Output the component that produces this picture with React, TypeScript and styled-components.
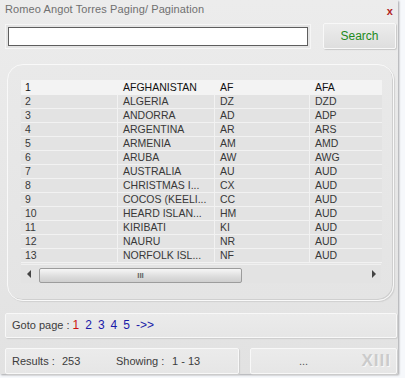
import React from "react";
import styled, { createGlobalStyle } from "styled-components";

const GlobalStyle = createGlobalStyle`
  html, body {
    margin: 0;
    padding: 0;
    background: #ffffff;
  }
  body {
    font-family: "Liberation Sans", Arial, sans-serif;
    font-size: 11px;
  }
`;

const Frame = styled.div`
  width: 405px;
  height: 378px;
  overflow: hidden;
  background: #f6f8fb;
`;

const Window = styled.div`
  width: 398px;
  height: 374px;
  display: flex;
  flex-direction: column;
  background: linear-gradient(#ececec, #e6e6e6 60%, #e2e2e2);
  box-shadow: 1px 1px 2px rgba(0, 0, 0, 0.35);
`;

const TitleBar = styled.div`
  height: 19px;
  display: flex;
  align-items: center;
  justify-content: space-between;
  padding: 0 5px 0 5px;
  color: #707070;
  font-size: 11px;
  letter-spacing: 0.1px;
`;

const Close = styled.span`
  color: #b02020;
  font-size: 11px;
  font-weight: bold;
  margin-top: 4px;
`;

const SearchRow = styled.div`
  display: flex;
  align-items: center;
  padding: 6px 2px 0 5px;
  gap: 12px;
`;

const InputWrap = styled.div`
  padding: 2px;
  border: 1px solid #f6f6f6;
  background: #e4e4e4;
`;

const SearchInput = styled.input`
  display: block;
  width: 294px;
  height: 15px;
  margin: 0;
  padding: 1px 2px;
  border: 1px solid #5e5e5e;
  background: #ffffff;
  outline: none;
`;

const SearchButton = styled.button`
  width: 76px;
  height: 26px;
  margin-top: -1px;
  border: 1px solid #f8f8f8;
  border-radius: 2px;
  background: linear-gradient(#ececec, #dedede);
  box-shadow: 1px 1px 1px #c8c8c8;
  color: #1d8a1d;
  font-family: "Liberation Sans", Arial, sans-serif;
  font-size: 12px;
  padding: 0;
`;

const ListPanel = styled.div`
  margin: 15px 4px 0 7px;
  height: 226px;
  border-radius: 16px;
  border: 1px solid #f9f9f9;
  background: linear-gradient(#e9e9e9, #e4e4e4);
  box-shadow: inset -1px -1px 0 #cfcfcf, 1px 1px 1px #d0d0d0;
  padding: 15px 12px 0 13px;
`;

const Grid = styled.div`
  width: 361px;
  background: #e3e3e3;
  font-size: 10.5px;
`;

const Row = styled.div<{ $selected?: boolean }>`
  display: grid;
  grid-template-columns: 96px 97px 95px 73px;
  height: 14px;
  line-height: 14px;
  color: ${(p) => (p.$selected ? "#111111" : "#383838")};
  background: ${(p) => (p.$selected ? "#f3f3f3" : "transparent")};
  border-bottom: 1px solid ${(p) => (p.$selected ? "#f3f3f3" : "#f2f2f2")};
  margin-bottom: -1px;
`;

const Cell = styled.div<{ $first?: boolean; $divided?: boolean }>`
  padding-left: ${(p) => (p.$first ? "3px" : "5px")};
  white-space: nowrap;
  overflow: hidden;
  border-left: 1px solid ${(p) => (p.$divided ? "#f2f2f2" : "transparent")};
`;

const HScroll = styled.div`
  display: flex;
  align-items: center;
  height: 18px;
  margin-top: 2px;
  border-top: 1px solid #f0f0f0;
  background: #e3e3e3;
`;

const Arrow = styled.div<{ $dir: "left" | "right" }>`
  width: 0;
  height: 0;
  border-top: 4px solid transparent;
  border-bottom: 4px solid transparent;
  ${(p) =>
    p.$dir === "left"
      ? "border-right: 4px solid #444; margin: 0 8px 0 6px;"
      : "border-left: 4px solid #444; margin: 0 5px 0 auto;"}
`;

const Thumb = styled.div`
  width: 201px;
  height: 13px;
  margin-top: 2px;
  border: 1px solid #9c9c9c;
  border-radius: 2px;
  background: linear-gradient(#f6f6f6, #dcdcdc 60%, #cfcfcf);
  display: flex;
  align-items: center;
  justify-content: center;
  color: #666;
  font-size: 8px;
  font-weight: bold;
`;

const Bar = styled.div`
  display: flex;
  align-items: center;
  height: 24px;
  border: 1px solid #f8f8f8;
  border-radius: 2px;
  background: linear-gradient(#ebebeb, #e6e6e6);
  box-shadow: 1px 1px 1px #cdcdcd;
  color: #3c3c3c;
  font-size: 11px;
`;

const GotoBar = styled(Bar)`
  margin: 12px 1px 0 5px;
  padding-left: 6px;
  font-size: 11px;
`;

const PageLink = styled.span<{ $current?: boolean }>`
  color: ${(p) => (p.$current ? "#cc1111" : "#1a1aa8")};
  margin-right: 6px;
  font-size: 12px;
`;

const StatusRow = styled.div`
  display: flex;
  gap: 11px;
  margin: 10px 1px 0 5px;
`;

const StatusLeft = styled(Bar)`
  width: 226px;
  padding-left: 6px;
`;

const StatusRight = styled(Bar)`
  flex: 1;
  justify-content: flex-end;
  position: relative;
`;

const Label = styled.span<{ $w: number }>`
  flex: 0 0 ${(p) => p.$w}px;
  white-space: pre;
`;

const Dots = styled.span`
  position: absolute;
  left: 48px;
  top: 6px;
  color: #555;
`;

const Roman = styled.span`
  color: #cbcbcb;
  font-size: 17px;
  font-weight: bold;
  letter-spacing: 1px;
  margin-right: 5px;
  text-shadow: 1px 1px 0 #f7f7f7;
`;

const rows: [string, string, string, string][] = [
  ["1", "AFGHANISTAN", "AF", "AFA"],
  ["2", "ALGERIA", "DZ", "DZD"],
  ["3", "ANDORRA", "AD", "ADP"],
  ["4", "ARGENTINA", "AR", "ARS"],
  ["5", "ARMENIA", "AM", "AMD"],
  ["6", "ARUBA", "AW", "AWG"],
  ["7", "AUSTRALIA", "AU", "AUD"],
  ["8", "CHRISTMAS I...", "CX", "AUD"],
  ["9", "COCOS (KEELI...", "CC", "AUD"],
  ["10", "HEARD ISLAN...", "HM", "AUD"],
  ["11", "KIRIBATI", "KI", "AUD"],
  ["12", "NAURU", "NR", "AUD"],
  ["13", "NORFOLK ISL...", "NF", "AUD"],
];

const App: React.FC = () => {
  return (
    <Frame>
      <GlobalStyle />
      <Window>
        <TitleBar>
          <span>Romeo Angot Torres Paging/ Pagination</span>
          <Close>x</Close>
        </TitleBar>
        <SearchRow>
          <InputWrap>
            <SearchInput type="text" />
          </InputWrap>
          <SearchButton>Search</SearchButton>
        </SearchRow>
        <ListPanel>
          <Grid>
            {rows.map((r, i) => (
              <Row key={r[0]} $selected={i === 0}>
                <Cell $first>{r[0]}</Cell>
                <Cell $divided={i > 0}>{r[1]}</Cell>
                <Cell $divided={i > 0}>{r[2]}</Cell>
                <Cell $divided={i > 0}>{r[3]}</Cell>
              </Row>
            ))}
          </Grid>
          <HScroll>
            <Arrow $dir="left" />
            <Thumb>III</Thumb>
            <Arrow $dir="right" />
          </HScroll>
        </ListPanel>
        <GotoBar>
          <span>Goto page :&nbsp;</span>
          <PageLink $current>1</PageLink>
          <PageLink>2</PageLink>
          <PageLink>3</PageLink>
          <PageLink>4</PageLink>
          <PageLink>5</PageLink>
          <PageLink>-&gt;&gt;</PageLink>
        </GotoBar>
        <StatusRow>
          <StatusLeft>
            <Label $w={50}>Results :</Label>
            <Label $w={54}>253</Label>
            <Label $w={56}>Showing :</Label>
            <Label $w={40}>1 - 13</Label>
          </StatusLeft>
          <StatusRight>
            <Dots>...</Dots>
            <Roman>XIII</Roman>
          </StatusRight>
        </StatusRow>
      </Window>
    </Frame>
  );
};

export default App;
